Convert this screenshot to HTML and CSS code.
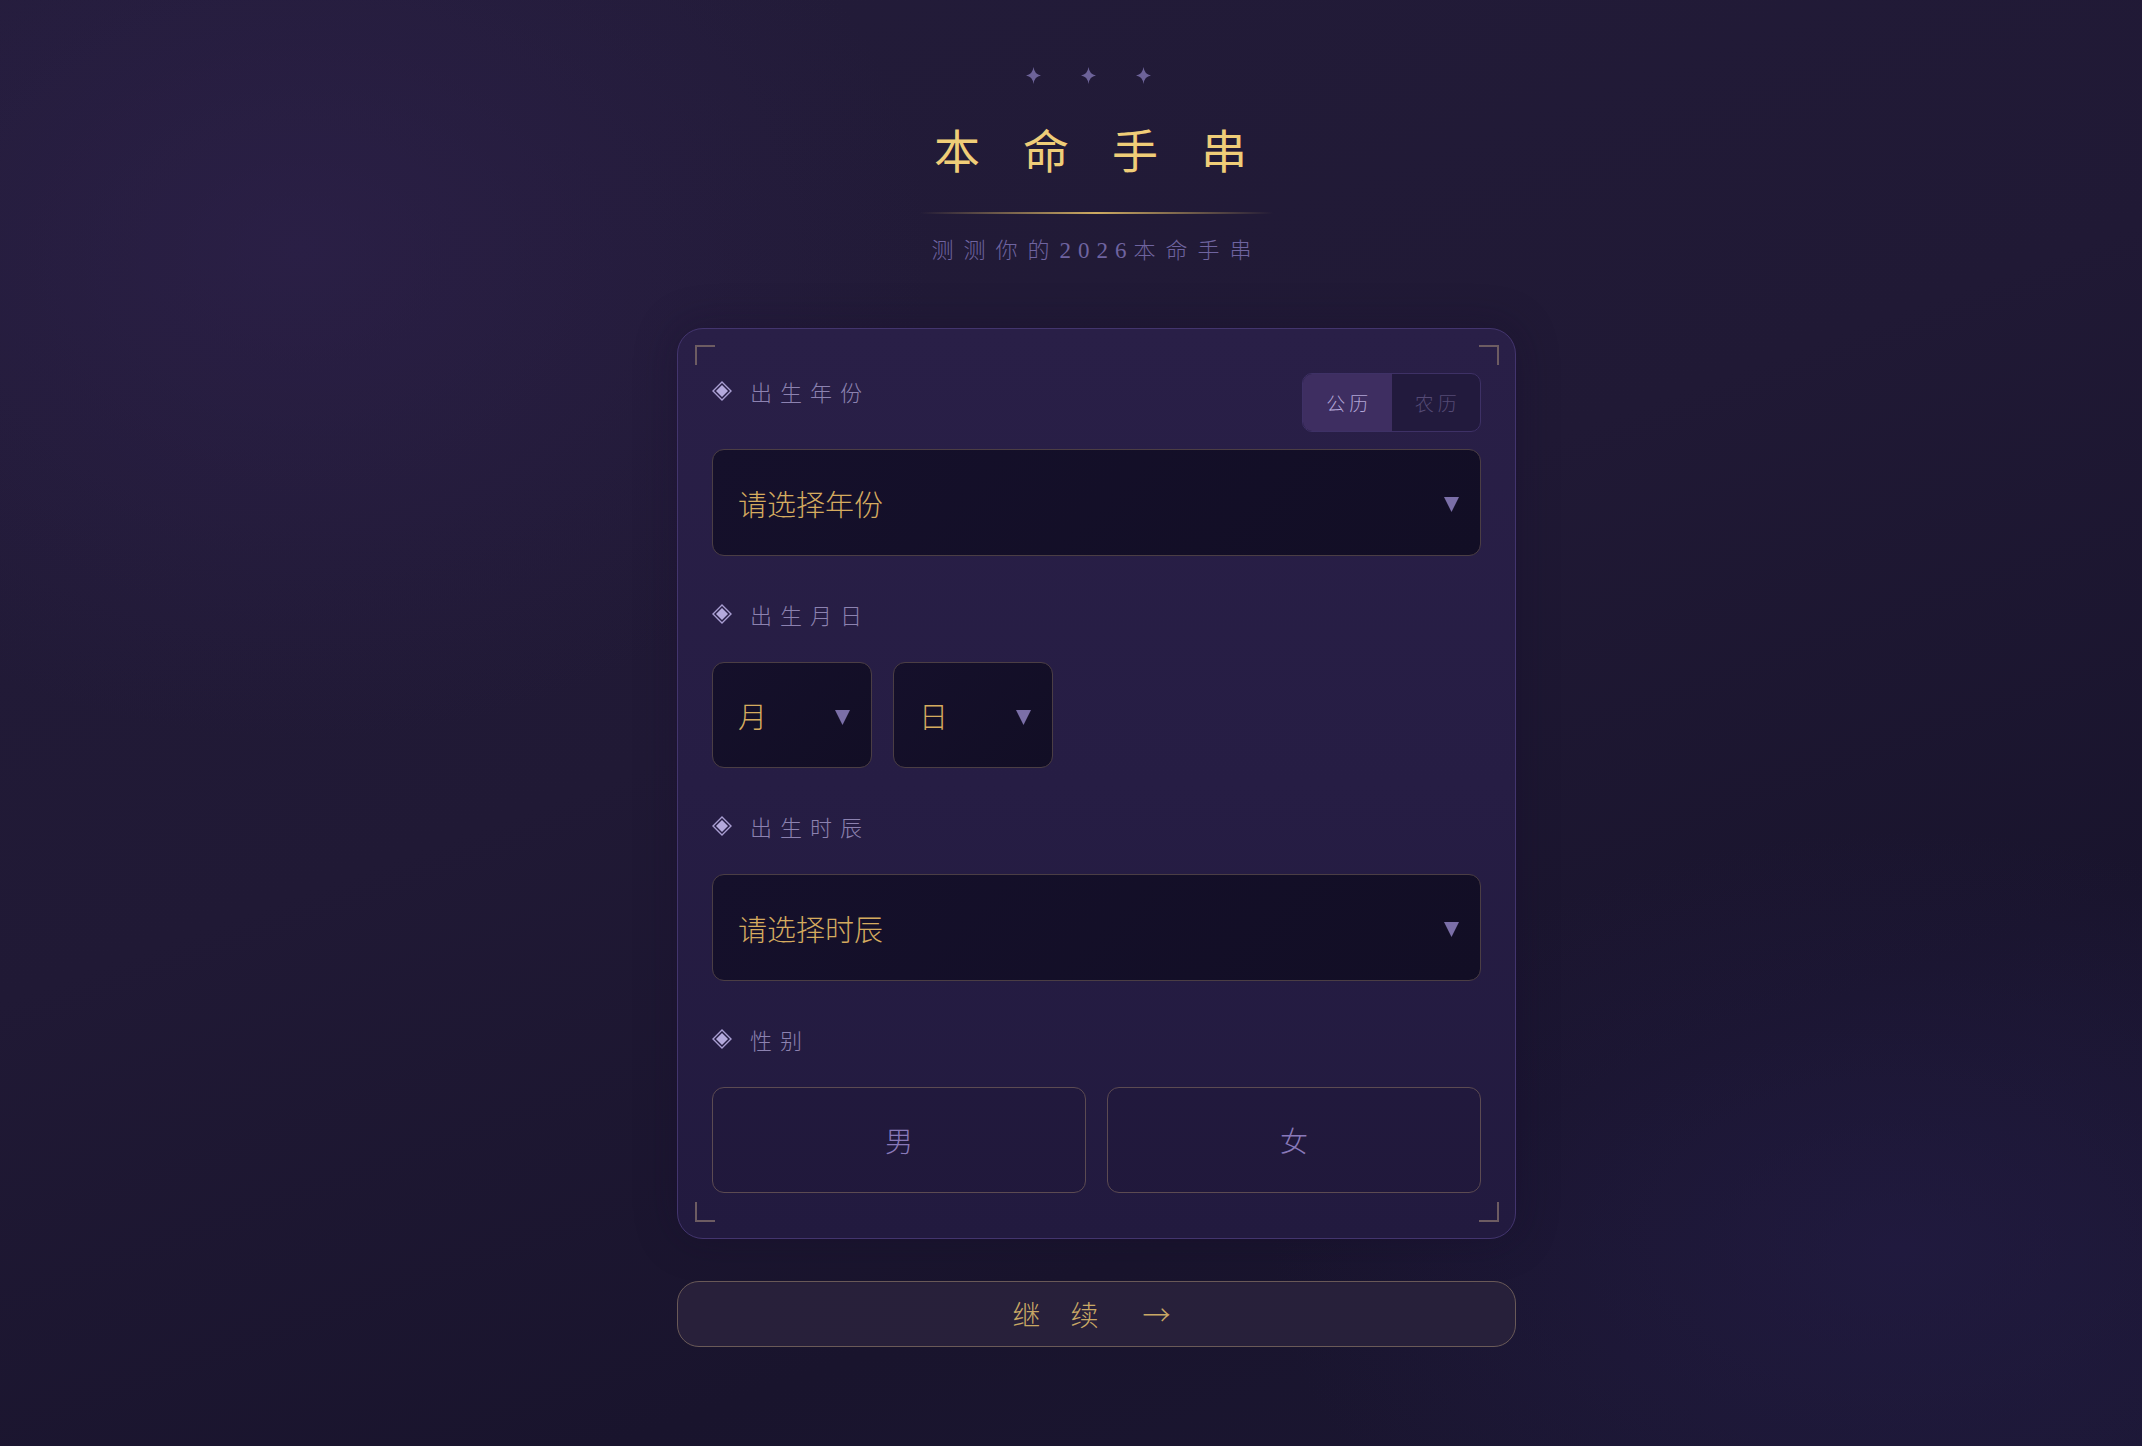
FILE: index.html
```html
<!DOCTYPE html>
<html lang="zh-CN">
<head>
<meta charset="utf-8">
<title>本命手串</title>
<link rel="stylesheet" href="styles.css">
</head>
<body>
<div class="page">
  <header class="hero">
    <div class="stars">
      <svg class="star" viewBox="0 0 16 18"><path d="M8 0 Q9 8 16 9 Q9 10 8 18 Q7 10 0 9 Q7 8 8 0Z"/></svg>
      <svg class="star" viewBox="0 0 16 18"><path d="M8 0 Q9 8 16 9 Q9 10 8 18 Q7 10 0 9 Q7 8 8 0Z"/></svg>
      <svg class="star" viewBox="0 0 16 18"><path d="M8 0 Q9 8 16 9 Q9 10 8 18 Q7 10 0 9 Q7 8 8 0Z"/></svg>
    </div>
    <h1 class="title">本命手串</h1>
    <div class="divider"></div>
    <p class="subtitle">测测你的<span class="num">2026</span>本命手串</p>
  </header>

  <section class="card">
    <span class="corner tl"></span>
    <span class="corner tr"></span>
    <span class="corner bl"></span>
    <span class="corner br"></span>

    <div class="row-head">
      <div class="label">
        <svg class="dia" viewBox="0 0 20 20"><path class="dia-o" d="M10 1 L19 10 L10 19 L1 10Z"/><path class="dia-i" d="M10 4 L16 10 L10 16 L4 10Z"/></svg>
        <span>出生年份</span>
      </div>
      <div class="toggle">
        <span class="tog active">公历</span>
        <span class="tog">农历</span>
      </div>
    </div>
    <div class="select wide">
      <span class="sel-text">请选择年份</span>
      <svg class="arrow" viewBox="0 0 15 15"><path d="M0 0 H15 L7.5 15Z"/></svg>
    </div>

    <div class="group">
      <div class="label">
        <svg class="dia" viewBox="0 0 20 20"><path class="dia-o" d="M10 1 L19 10 L10 19 L1 10Z"/><path class="dia-i" d="M10 4 L16 10 L10 16 L4 10Z"/></svg>
        <span>出生月日</span>
      </div>
      <div class="md-row">
        <div class="select small">
          <span class="sel-text">月</span>
          <svg class="arrow" viewBox="0 0 15 15"><path d="M0 0 H15 L7.5 15Z"/></svg>
        </div>
        <div class="select small">
          <span class="sel-text">日</span>
          <svg class="arrow" viewBox="0 0 15 15"><path d="M0 0 H15 L7.5 15Z"/></svg>
        </div>
      </div>
    </div>

    <div class="group">
      <div class="label">
        <svg class="dia" viewBox="0 0 20 20"><path class="dia-o" d="M10 1 L19 10 L10 19 L1 10Z"/><path class="dia-i" d="M10 4 L16 10 L10 16 L4 10Z"/></svg>
        <span>出生时辰</span>
      </div>
      <div class="select wide">
        <span class="sel-text">请选择时辰</span>
        <svg class="arrow" viewBox="0 0 15 15"><path d="M0 0 H15 L7.5 15Z"/></svg>
      </div>
    </div>

    <div class="group">
      <div class="label">
        <svg class="dia" viewBox="0 0 20 20"><path class="dia-o" d="M10 1 L19 10 L10 19 L1 10Z"/><path class="dia-i" d="M10 4 L16 10 L10 16 L4 10Z"/></svg>
        <span>性别</span>
      </div>
      <div class="gender-row">
        <div class="gender">男</div>
        <div class="gender">女</div>
      </div>
    </div>
  </section>

  <button class="continue">继续<span class="arr">→</span></button>
</div>
</body>
</html>
```

FILE: styles.css
```css
* { box-sizing: border-box; }
html, body { margin: 0; padding: 0; }
body {
  min-height: 1446px;
  font-family: "Noto Sans CJK SC", "Noto Sans", sans-serif;
  background:
    radial-gradient(ellipse 900px 700px at 300px 250px, rgba(50, 35, 82, 0.5), rgba(50, 35, 82, 0) 70%),
    radial-gradient(ellipse 900px 600px at 1900px 1250px, rgba(38, 30, 76, 0.5), rgba(38, 30, 76, 0) 70%),
    linear-gradient(160deg, #231c3a 0%, #201935 45%, #19142d 75%, #1b1733 100%);
}
.page {
  width: 839px;
  margin-left: 677px;
  padding-top: 67px;
  display: flex;
  flex-direction: column;
}
.hero {
  display: flex;
  flex-direction: column;
  align-items: center;
}
.stars {
  display: flex;
  gap: 40px;
  height: 17px;
  margin-right: 17px;
}
.star { width: 15px; height: 17px; fill: #6d6399; }
.title {
  margin: 35px 0 0 31px;
  font-size: 46px;
  line-height: 58px;
  height: 58px;
  font-weight: 400;
  letter-spacing: 43px;
  color: #efcd78;
}
.divider {
  margin-top: 35px;
  width: 353px;
  height: 2px;
  background: linear-gradient(90deg, rgba(201, 164, 92, 0), rgba(214, 178, 100, 0.95) 50%, rgba(201, 164, 92, 0));
}
.subtitle {
  margin: 19px 0 0 0;
  height: 30px;
  font-size: 22px;
  font-weight: 300;
  line-height: 30px;
  letter-spacing: 10px;
  color: #6f64a0;
}
.subtitle .num {
  font-family: "Liberation Serif", serif;
  font-size: 23px;
  line-height: 1;
  letter-spacing: 7px;
}
.card {
  position: relative;
  margin-top: 65px;
  border: 1px solid #43356e;
  border-radius: 26px;
  padding: 44px 34px 45px 34px;
  background: linear-gradient(180deg, #291f47 0%, #261d44 50%, #221a3f 100%);
  box-shadow: 0 0 40px rgba(20, 12, 40, 0.35);
}
.corner {
  position: absolute;
  width: 20px;
  height: 20px;
  border: 0 solid #6d5c62;
}
.corner.tl { top: 16px; left: 17px; border-top-width: 2px; border-left-width: 2px; }
.corner.tr { top: 16px; right: 16px; border-top-width: 2px; border-right-width: 2px; }
.corner.bl { bottom: 16px; left: 17px; border-bottom-width: 2px; border-left-width: 2px; }
.corner.br { bottom: 16px; right: 16px; border-bottom-width: 2px; border-right-width: 2px; }

.row-head {
  display: flex;
  justify-content: space-between;
  align-items: flex-start;
  margin-bottom: 17px;
}
.row-head .label { margin-top: 3px; margin-bottom: 0; }
.label {
  display: flex;
  align-items: center;
  height: 30px;
  margin-bottom: 33px;
  font-size: 22px;
  font-weight: 300;
  letter-spacing: 8px;
  color: #8c82b0;
}
.dia { width: 20px; height: 20px; margin-right: 18px; flex: none; }
.dia-o { fill: none; stroke: #a99ed2; stroke-width: 1.4; }
.dia-i { fill: #b4a9dc; }

.toggle {
  display: flex;
  width: 179px;
  height: 59px;
  border: 1px solid #3e3166;
  border-radius: 10px;
  overflow: hidden;
  background: #221a3d;
}
.tog {
  flex: 1;
  display: flex;
  align-items: center;
  justify-content: center;
  padding-left: 4px;
  font-size: 19px;
  font-weight: 300;
  letter-spacing: 4px;
  color: #554a75;
}
.tog.active {
  background: #3e2e61;
  color: #b1a5d6;
}

.select {
  display: flex;
  align-items: center;
  justify-content: space-between;
  height: 106px;
  padding: 0 21px 0 25px;
  border: 1px solid #4b3e44;
  border-radius: 12px;
  background: linear-gradient(135deg, #15102b, #120e25);
}
.select.wide { height: 107px; }
.select.small { width: 160px; }
.sel-text {
  font-size: 29px;
  font-weight: 300;
  color: #d5ab5f;
}
.arrow { width: 15px; height: 15px; fill: #7b6fa8; margin-top: 4px; }

.group { margin-top: 43px; }
.md-row { display: flex; gap: 21px; }
.gender-row { display: flex; gap: 21px; }
.gender {
  flex: 1;
  height: 106px;
  display: flex;
  align-items: center;
  justify-content: center;
  border: 1px solid #5c4b52;
  border-radius: 12px;
  background: rgba(30, 22, 55, 0.4);
  font-size: 28px;
  font-weight: 300;
  color: #8979b9;
}

.continue {
  margin-top: 42px;
  height: 66px;
  width: 100%;
  border: 1.5px solid #6a5a58;
  border-radius: 22px;
  background: linear-gradient(90deg, #28203a, #27203a);
  font-family: "Noto Sans CJK SC", sans-serif;
  font-size: 28px;
  font-weight: 300;
  letter-spacing: 30px;
  color: #c9a865;
  padding: 0 0 0 20px;
  line-height: 1;
}
.continue .arr { margin-left: 14px; }
```
